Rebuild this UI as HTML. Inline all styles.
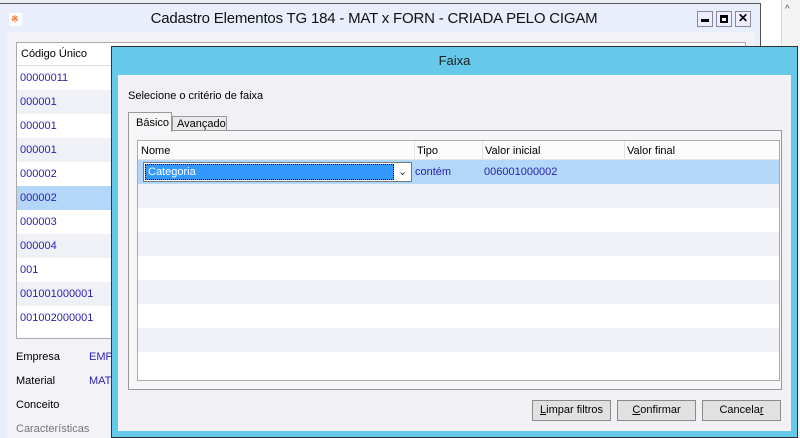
<!DOCTYPE html>
<html><head><meta charset="utf-8"><style>
*{margin:0;padding:0;box-sizing:border-box}
body{width:800px;height:438px;overflow:hidden;position:relative;background:#fff;font-family:"Liberation Sans",sans-serif;font-size:11px;color:#000}
.a{position:absolute}
.row{position:absolute;left:0;right:0;height:24px}
.blue{color:#2a1fb0}
.btn{position:absolute;top:400px;height:21px;width:79px;background:#e1e1e1;border:1px solid #8a8a8a;text-align:center;line-height:19px;font-size:11px}
</style></head><body>
<div class="a" style="left:0;top:0;width:800px;height:4px;background:#e9ecf2"></div>
<div class="a" style="left:760px;top:0;width:40px;height:438px;background:#fff"></div>
<div class="a" style="left:781px;top:0;width:19px;height:438px;background:#f4f4f4;border-left:1px solid #ddd"></div>
<div class="a" style="left:785px;top:4px;font-size:10px;color:#555">^</div>
<div class="a" style="left:0;top:3px;width:761px;height:435px;background:#e8eefb;border-right:1px solid #555;border-top:1px solid #555"></div>
<div class="a" style="left:7px;top:32px;width:748px;height:406px;background:#f3f3f7"></div>
<div class="a" style="left:9px;top:13px;width:13px;height:13px;background:#fff"><div style="margin:2px;width:9px;height:9px;color:#f07020;font-size:9px;line-height:9px;font-weight:bold">※</div></div>
<div class="a" style="left:0;top:10px;width:748px;text-align:center;font-size:15px;color:#111;letter-spacing:-0.2px">Cadastro Elementos TG 184 - MAT x FORN - CRIADA PELO CIGAM</div>
<div class="a" style="left:697px;top:11px;width:16px;height:16px;border:1px solid #889;background:#eef"><div style="margin:7px 3px 0;height:3px;background:#000"></div></div>
<div class="a" style="left:716px;top:11px;width:16px;height:16px;border:1px solid #889;background:#eef"><div style="margin:3px;height:8px;border:2px solid #000;border-top-width:3px"></div></div>
<div class="a" style="left:735px;top:11px;width:16px;height:16px;border:1px solid #889;background:#eef;text-align:center;font-weight:bold;font-size:12px;line-height:13px">✕</div>
<div class="a" style="left:16px;top:42px;width:730px;height:297px;border:1px solid #aaa;background:#fff;overflow:hidden">
 <div class="row" style="top:0;height:23px;background:#fff;border-bottom:1px solid #ddd;padding:5px 4px">Código Único</div>
 <div class="row blue" style="top:23px;padding:6px 3px">00000011</div>
 <div class="row blue" style="top:47px;background:#f0f1f7;padding:6px 3px">000001</div>
 <div class="row blue" style="top:71px;padding:6px 3px">000001</div>
 <div class="row blue" style="top:95px;background:#f0f1f7;padding:6px 3px">000001</div>
 <div class="row blue" style="top:119px;padding:6px 3px">000002</div>
 <div class="row blue" style="top:143px;background:#b3d7f8;padding:6px 3px">000002</div>
 <div class="row blue" style="top:167px;padding:6px 3px">000003</div>
 <div class="row blue" style="top:191px;background:#f0f1f7;padding:6px 3px">000004</div>
 <div class="row blue" style="top:215px;padding:6px 3px">001</div>
 <div class="row blue" style="top:239px;background:#f0f1f7;padding:6px 3px">001001000001</div>
 <div class="row blue" style="top:263px;padding:6px 3px">001002000001</div>
</div>
<div class="a" style="left:16px;top:351px">Empresa</div><div class="a blue" style="left:89px;top:351px">EMPRESA</div>
<div class="a" style="left:16px;top:375px">Material</div><div class="a blue" style="left:89px;top:375px">MATERIAL</div>
<div class="a" style="left:16px;top:399px">Conceito</div>
<div class="a" style="left:16px;top:423px;color:#777">Características</div>
<div class="a" style="left:111px;top:46px;width:687px;height:392px;background:#66c9ea;border:1px solid #333"></div>
<div class="a" style="left:111px;top:53px;width:687px;text-align:center;font-size:13px;color:#222">Faixa</div>
<div class="a" style="left:118px;top:75px;width:673px;height:356px;background:#f1f1f5"></div>
<div class="a" style="left:128px;top:90px">Selecione o critério de faixa</div>
<div class="a" style="left:128px;top:130px;width:654px;height:260px;border:1px solid #999;background:#f6f6f9"></div>
<div class="a" style="left:128px;top:112px;width:44px;height:20px;border:1px solid #999;border-bottom:none;background:#f6f6f9;padding:4px 7px">Básico</div>
<div class="a" style="left:172px;top:116px;width:55px;height:15px;border:1px solid #999;background:#eaeaea;padding:1px 4px">Avançado</div>
<div class="a" style="left:137px;top:140px;width:643px;height:241px;border:1px solid #aaa;background:#fff;overflow:hidden">
 <div class="row" style="top:0;height:19px;background:#fcfcfc;border-bottom:1px solid #e4e4e4">
  <span class="a" style="left:3px;top:4px">Nome</span>
  <span class="a" style="left:276px;top:0;height:19px;border-left:1px solid #e4e4e4;padding:4px 2px">Tipo</span>
  <span class="a" style="left:344px;top:0;height:19px;border-left:1px solid #e4e4e4;padding:4px 2px">Valor inicial</span>
  <span class="a" style="left:486px;top:0;height:19px;border-left:1px solid #e4e4e4;padding:4px 2px">Valor final</span>
 </div>
 <div class="row" style="top:19px;background:#b3d7f8">
  <div class="a" style="left:5px;top:2px;width:269px;height:20px;border:1px solid #777;background:#fff">
   <div class="a" style="left:1px;top:1px;width:249px;height:16px;background:#3399ff;color:#fff;padding:1px 2px;border:1px dotted #000">Categoria</div>
   <div class="a" style="left:254px;top:2px;font-size:11px;color:#333">⌄</div>
  </div>
  <span class="a blue" style="left:277px;top:6px">contém</span>
  <span class="a blue" style="left:346px;top:6px">006001000002</span>
 </div>
 <div class="row" style="top:43px;background:#f0f1f7"></div>
 <div class="row" style="top:91px;background:#f0f1f7"></div>
 <div class="row" style="top:139px;background:#f0f1f7"></div>
 <div class="row" style="top:187px;background:#f0f1f7"></div>
</div>
<div class="btn" style="left:532px"><u>L</u>impar filtros</div>
<div class="btn" style="left:617px"><u>C</u>onfirmar</div>
<div class="btn" style="left:702px">Cancela<u>r</u></div>
</body></html>
